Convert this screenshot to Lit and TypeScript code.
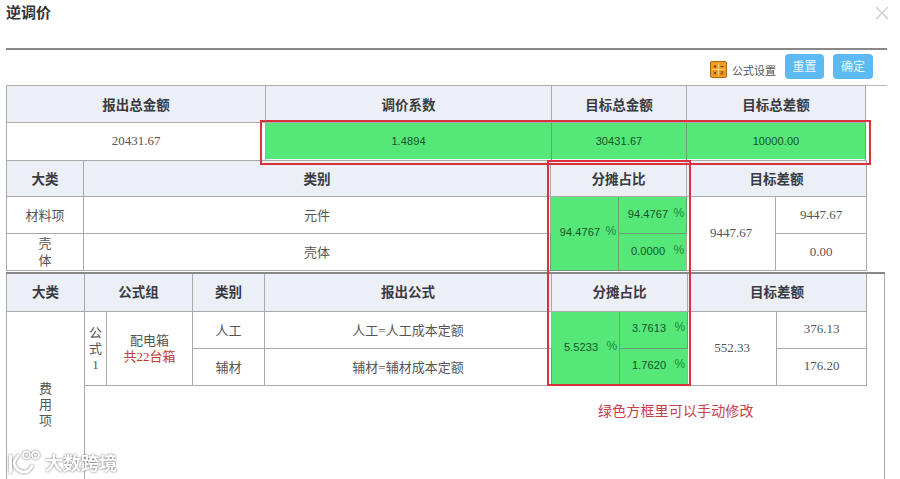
import { LitElement, html, css } from 'lit';
import { customElement } from 'lit/decorators.js';

const pct = (v: string) => html`<div class="pct"><span class="num">${v}</span><i>%</i></div>`;

@customElement('app-root')
export class AppRoot extends LitElement {
  static styles = css`
    :host {
      display: block;
      position: relative;
      width: 900px;
      height: 479px;
      overflow: hidden;
      background: #fff;
      color: #555;
      font: 13px "Liberation Serif", "Noto Sans CJK SC", serif;
    }

    /* dialog head */
    .head {
      display: flex;
      justify-content: space-between;
      height: 48px;
      margin-left: 6px;
      width: 881px;
      border-bottom: 2px solid #888;
      box-sizing: content-box;
    }
    .head h1 {
      margin: 2px 0 0;
      font: 700 15px/20px "Noto Sans CJK SC", sans-serif;
      color: #333;
    }
    .close { margin-top: 6px; margin-right: -2px; }

    /* toolbar */
    .tools {
      display: flex;
      align-items: flex-start;
      justify-content: flex-end;
      box-sizing: border-box;
      height: 36px;
      margin-left: 6px;
      width: 881px;
      padding: 4px 14px 0 0;
      border-bottom: 1px solid #bbb;
    }
    .calc { margin: 7px 5px 0 0; }
    .tools span {
      margin: 8px 9px 0 0;
      font: 11px/16px "Noto Sans CJK SC", sans-serif;
      color: #555;
    }
    .btn {
      width: 39px;
      height: 25px;
      border-radius: 4px;
      background: #5cb9f2;
      color: #e8f6ff;
      font: 12px/23px "Noto Sans CJK SC", sans-serif;
      text-align: center;
    }
    .btn + .btn { width: 40px; margin-left: 9px; }

    /* tables */
    table {
      table-layout: fixed;
      border-collapse: collapse;
      margin-left: 6px;
    }
    td, th {
      border: 1px solid #aaa;
      padding: 0 0 1px;
      text-align: center;
      box-sizing: border-box;
      font-family: "Liberation Serif", "Noto Sans CJK SC", serif;
      font-size: 13px;
      font-weight: 400;
    }
    th {
      height: 37px;
      background: #eceff5;
      color: #3a3a42;
      font: 700 13.5px "Noto Sans CJK SC", sans-serif;
    }
    td { height: 37px; color: #555; }
    .low { height: 36px; }

    .t1 { margin-top: -1px; width: 859px; }
    .t1 .val { height: 38px; }
    .t1 col:nth-child(1) { width: 259px; }
    .t1 col:nth-child(2) { width: 286px; }
    .t1 col:nth-child(3) { width: 135px; }
    .t1 col:nth-child(4) { width: 179px; }

    .t2 { margin-top: -1px; width: 860px; border-bottom: 1px solid #bbb; }
    .t2 th { height: 36px; }
    .t2 .low { height: 35px; line-height: 17px; }
    .t2 col:nth-child(1) { width: 77px; }
    .t2 col:nth-child(2) { width: 467px; }
    .t2 col:nth-child(3) { width: 68px; }
    .t2 col:nth-child(4) { width: 68px; }
    .t2 col:nth-child(5) { width: 89px; }
    .t2 col:nth-child(6) { width: 91px; }

    .t3 { margin-top: 1px; width: 878px; border-top: 2px solid #888; }
    .t3 tr:first-child th { border-top: none; height: 38px; padding-bottom: 2px; }
    .t3 col:nth-child(1) { width: 78px; }
    .t3 col:nth-child(2) { width: 22px; }
    .t3 col:nth-child(3) { width: 86px; }
    .t3 col:nth-child(4) { width: 72px; }
    .t3 col:nth-child(5) { width: 287px; }
    .t3 col:nth-child(6) { width: 68px; }
    .t3 col:nth-child(7) { width: 68px; }
    .t3 col:nth-child(8) { width: 89px; }
    .t3 col:nth-child(9) { width: 90px; }
    .t3 col:nth-child(10) { width: 18px; }

    .green {
      background: #55e777;
      color: #14532a;
      font: 11px "Liberation Sans", sans-serif;
      letter-spacing: 0.1px;
      border-color: #6a9f7a;
    }
    .gap { box-shadow: inset 0 -1px 0 #fff; }
    .pct {
      display: flex;
      justify-content: center;
      padding-left: 3px;
    }
    .num { width: 50px; text-align: center; }
    .pct i {
      width: 12px;
      font-style: normal;
      font-size: 12px;
      color: #1b8a3e;
      position: relative;
      top: -2px;
    }

    .narrow { line-height: 16px; padding: 2px 0 0; }
    .red { display: block; color: #c0392b; line-height: 15px; }
    .group { line-height: 16px; padding-top: 2px; }
    .fee { line-height: 16px; border-bottom: none; }
    .blank {
      height: 114px;
      border-width: 1px 0 0;
      vertical-align: top;
      text-align: left;
      padding: 14px 0 0 513px;
      color: #c8404a;
      font: 14px/20px "Noto Sans CJK SC", sans-serif;
      letter-spacing: 0.15px;
    }
    .side { border-width: 0 1px 0 0; }
    .side.top { border-top: 1px solid #aaa; }

    /* annotations drawn over the tables */
    .mark {
      position: absolute;
      box-sizing: border-box;
      border: 2px solid #d8323c;
      pointer-events: none;
    }
    .mark.a { left: 260px; top: 120px; width: 611px; height: 45px; }
    .mark.b { left: 547px; top: 160px; width: 144px; height: 226px; }

    /* watermark */
    .wm {
      position: absolute;
      left: 8px;
      top: 449px;
      display: flex;
      align-items: center;
      gap: 4px;
      filter: drop-shadow(0 0 1px #666);
    }
    .wm b {
      font: 700 18px/26px "Noto Sans CJK SC", sans-serif;
      color: #fff;
    }
  `;

  render() {
    return html`
      <div class="head">
        <h1>逆调价</h1>
        <svg class="close" width="14" height="14" viewBox="0 0 14 14" fill="none" stroke="#ccc" stroke-width="1.4">
          <path d="M1 1 13 13M13 1 1 13" />
        </svg>
      </div>

      <div class="tools">
        <svg class="calc" width="17" height="17" viewBox="0 0 17 17" fill="none">
          <rect x=".5" y=".5" width="16" height="16" rx="1.5" fill="#f59a23" stroke="#a9690c" />
          <path d="M8.5 2v13M2 8.5h13" stroke="#ffd27a" />
          <path d="M3.5 5.5h3M5 4v3M10.5 5.5h3M3.5 10.5l3 3M6.5 10.5l-3 3M10.5 11h3M10.5 13h3" stroke="#6e4308" />
        </svg>
        <span>公式设置</span>
        <div class="btn">重置</div>
        <div class="btn">确定</div>
      </div>

      <table class="t1">
        <colgroup><col /><col /><col /><col /></colgroup>
        <tr><th>报出总金额</th><th>调价系数</th><th>目标总金额</th><th>目标总差额</th></tr>
        <tr>
          <td class="val">20431.67</td>
          <td class="green gap">1.4894</td>
          <td class="green gap">30431.67</td>
          <td class="green gap">10000.00</td>
        </tr>
      </table>

      <table class="t2">
        <colgroup><col /><col /><col /><col /><col /><col /></colgroup>
        <tr><th>大类</th><th>类别</th><th colspan="2">分摊占比</th><th colspan="2">目标差额</th></tr>
        <tr>
          <td>材料项</td>
          <td>元件</td>
          <td class="green" rowspan="2">${pct('94.4767')}</td>
          <td class="green">${pct('94.4767')}</td>
          <td rowspan="2">9447.67</td>
          <td>9447.67</td>
        </tr>
        <tr>
          <td class="low">壳<br />体</td>
          <td>壳体</td>
          <td class="green">${pct('0.0000')}</td>
          <td>0.00</td>
        </tr>
      </table>

      <table class="t3">
        <colgroup><col /><col /><col /><col /><col /><col /><col /><col /><col /><col /></colgroup>
        <tr>
          <th>大类</th><th colspan="2">公式组</th><th>类别</th><th>报出公式</th>
          <th colspan="2">分摊占比</th><th colspan="2">目标差额</th>
          <td class="side top" rowspan="3"></td>
        </tr>
        <tr>
          <td class="fee" rowspan="3">费<br />用<br />项</td>
          <td class="narrow" rowspan="2">公<br />式<br />1</td>
          <td class="group" rowspan="2">配电箱<span class="red">共22台箱</span></td>
          <td>人工</td>
          <td>人工=人工成本定额</td>
          <td class="green" rowspan="2">${pct('5.5233')}</td>
          <td class="green">${pct('3.7613')}</td>
          <td rowspan="2">552.33</td>
          <td>376.13</td>
        </tr>
        <tr>
          <td class="low">辅材</td>
          <td>辅材=辅材成本定额</td>
          <td class="green">${pct('1.7620')}</td>
          <td>176.20</td>
        </tr>
        <tr>
          <td class="blank" colspan="8">绿色方框里可以手动修改</td>
          <td class="side"></td>
        </tr>
      </table>

      <div class="mark a"></div>
      <div class="mark b"></div>

      <div class="wm">
        <svg width="33" height="26" viewBox="0 0 33 26" fill="none" stroke="#fff" stroke-width="3" stroke-linecap="round">
          <path d="M2.5 7v16M10 7C7 10 6 13 6 15c2 5 6 8 10 8s6-2 8-6" />
          <circle cx="18.5" cy="6" r="3.5" stroke-width="1.8" />
          <circle cx="27.5" cy="6" r="3.5" stroke-width="1.8" />
        </svg>
        <b>大数跨境</b>
      </div>
    `;
  }
}
